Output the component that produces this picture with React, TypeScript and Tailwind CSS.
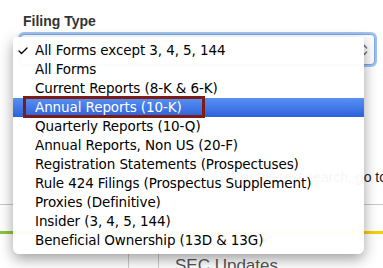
import {Check} from "lucide-react";

const options = [
    'All Forms except 3, 4, 5, 144',
    'All Forms',
    'Current Reports (8-K & 6-K)',
    'Annual Reports (10-K)',
    'Quarterly Reports (10-Q)',
    'Annual Reports, Non US (20-F)',
    'Registration Statements (Prospectuses)',
    'Rule 424 Filings (Prospectus Supplement)',
    'Proxies (Definitive)',
    'Insider (3, 4, 5, 144)',
    'Beneficial Ownership (13D & 13G)',
];

const SelectArrows = () => (
    <svg width="7" height="12" viewBox="0 0 7 12" className="text-gray-500">
        <path d="M1 4.5 L3.5 1.5 L6 4.5" fill="none" stroke="currentColor" strokeWidth="1.2"/>
        <path d="M1 7.5 L3.5 10.5 L6 7.5" fill="none" stroke="currentColor" strokeWidth="1.2"/>
    </svg>
);

const Menu = () => {
    return (
        <div className="absolute left-[13px] top-[37px] w-[351px] rounded-t-[3px] rounded-b-[6px] bg-white/[0.96] py-[4px] shadow-[0_5px_14px_rgba(0,0,0,0.38)] font-['DejaVu_Sans',sans-serif] text-[13.5px] text-black">
            {options.map((label, i) => {
                const active = i === 3;
                return (
                    <div
                        key={label}
                        className={
                            active
                                ? 'relative flex h-[19px] items-center bg-gradient-to-b from-[#5a90f1] to-[#2c61dc] text-white'
                                : 'relative flex h-[19px] items-center'
                        }
                    >
                        <span className="flex w-[22px] justify-end pr-[6px]">
                            {i === 0 && <Check size={12} strokeWidth={2.5}/>}
                        </span>
                        <span className="whitespace-nowrap tracking-[-0.1px]">{label}</span>
                    </div>
                );
            })}
        </div>
    );
};

export default function App() {
    return (
        <div className="relative h-[268px] w-[383px] overflow-hidden bg-white font-['Liberation_Sans',sans-serif]">
            <div className="pl-[23px] pt-[13px] text-[14px] font-bold leading-[16px] text-[#333]">
                Filing Type
            </div>
            <div className="ml-[20px] mt-[5px] flex h-[31px] w-[355px] items-center justify-end rounded-[4px] border border-[#7aa7e6] bg-white pr-[6px] shadow-[0_0_0_2px_rgba(120,170,235,0.7)]">
                <SelectArrows/>
            </div>

            <div className="mt-[104px] flex w-[387px] justify-end whitespace-nowrap text-[14px] leading-[16px] text-[#222]">
                For full-text search, go to
            </div>

            <div className="mt-[19px] h-px w-full bg-[#c8c8c8]"></div>

            <div className="mt-[26px] flex h-[3px] w-full">
                <div className="w-[190px] bg-[#8cc63e]"></div>
                <div className="flex-1 bg-[#f4d000]"></div>
            </div>

            <div className="mt-[17px] flex h-[20px]">
                <div className="ml-[128px] w-px bg-[#ccc]"></div>
                <div className="ml-[29px] w-px bg-[#ccc]"></div>
                <div className="ml-[16px] mt-[5px] text-[17px] leading-[20px] text-[#555]">SEC Updates</div>
            </div>

            <Menu/>

            <div className="absolute left-[23px] top-[96px] h-[22px] w-[182px] border-[3px] border-[#7d1c12]"></div>
        </div>
    );
}
